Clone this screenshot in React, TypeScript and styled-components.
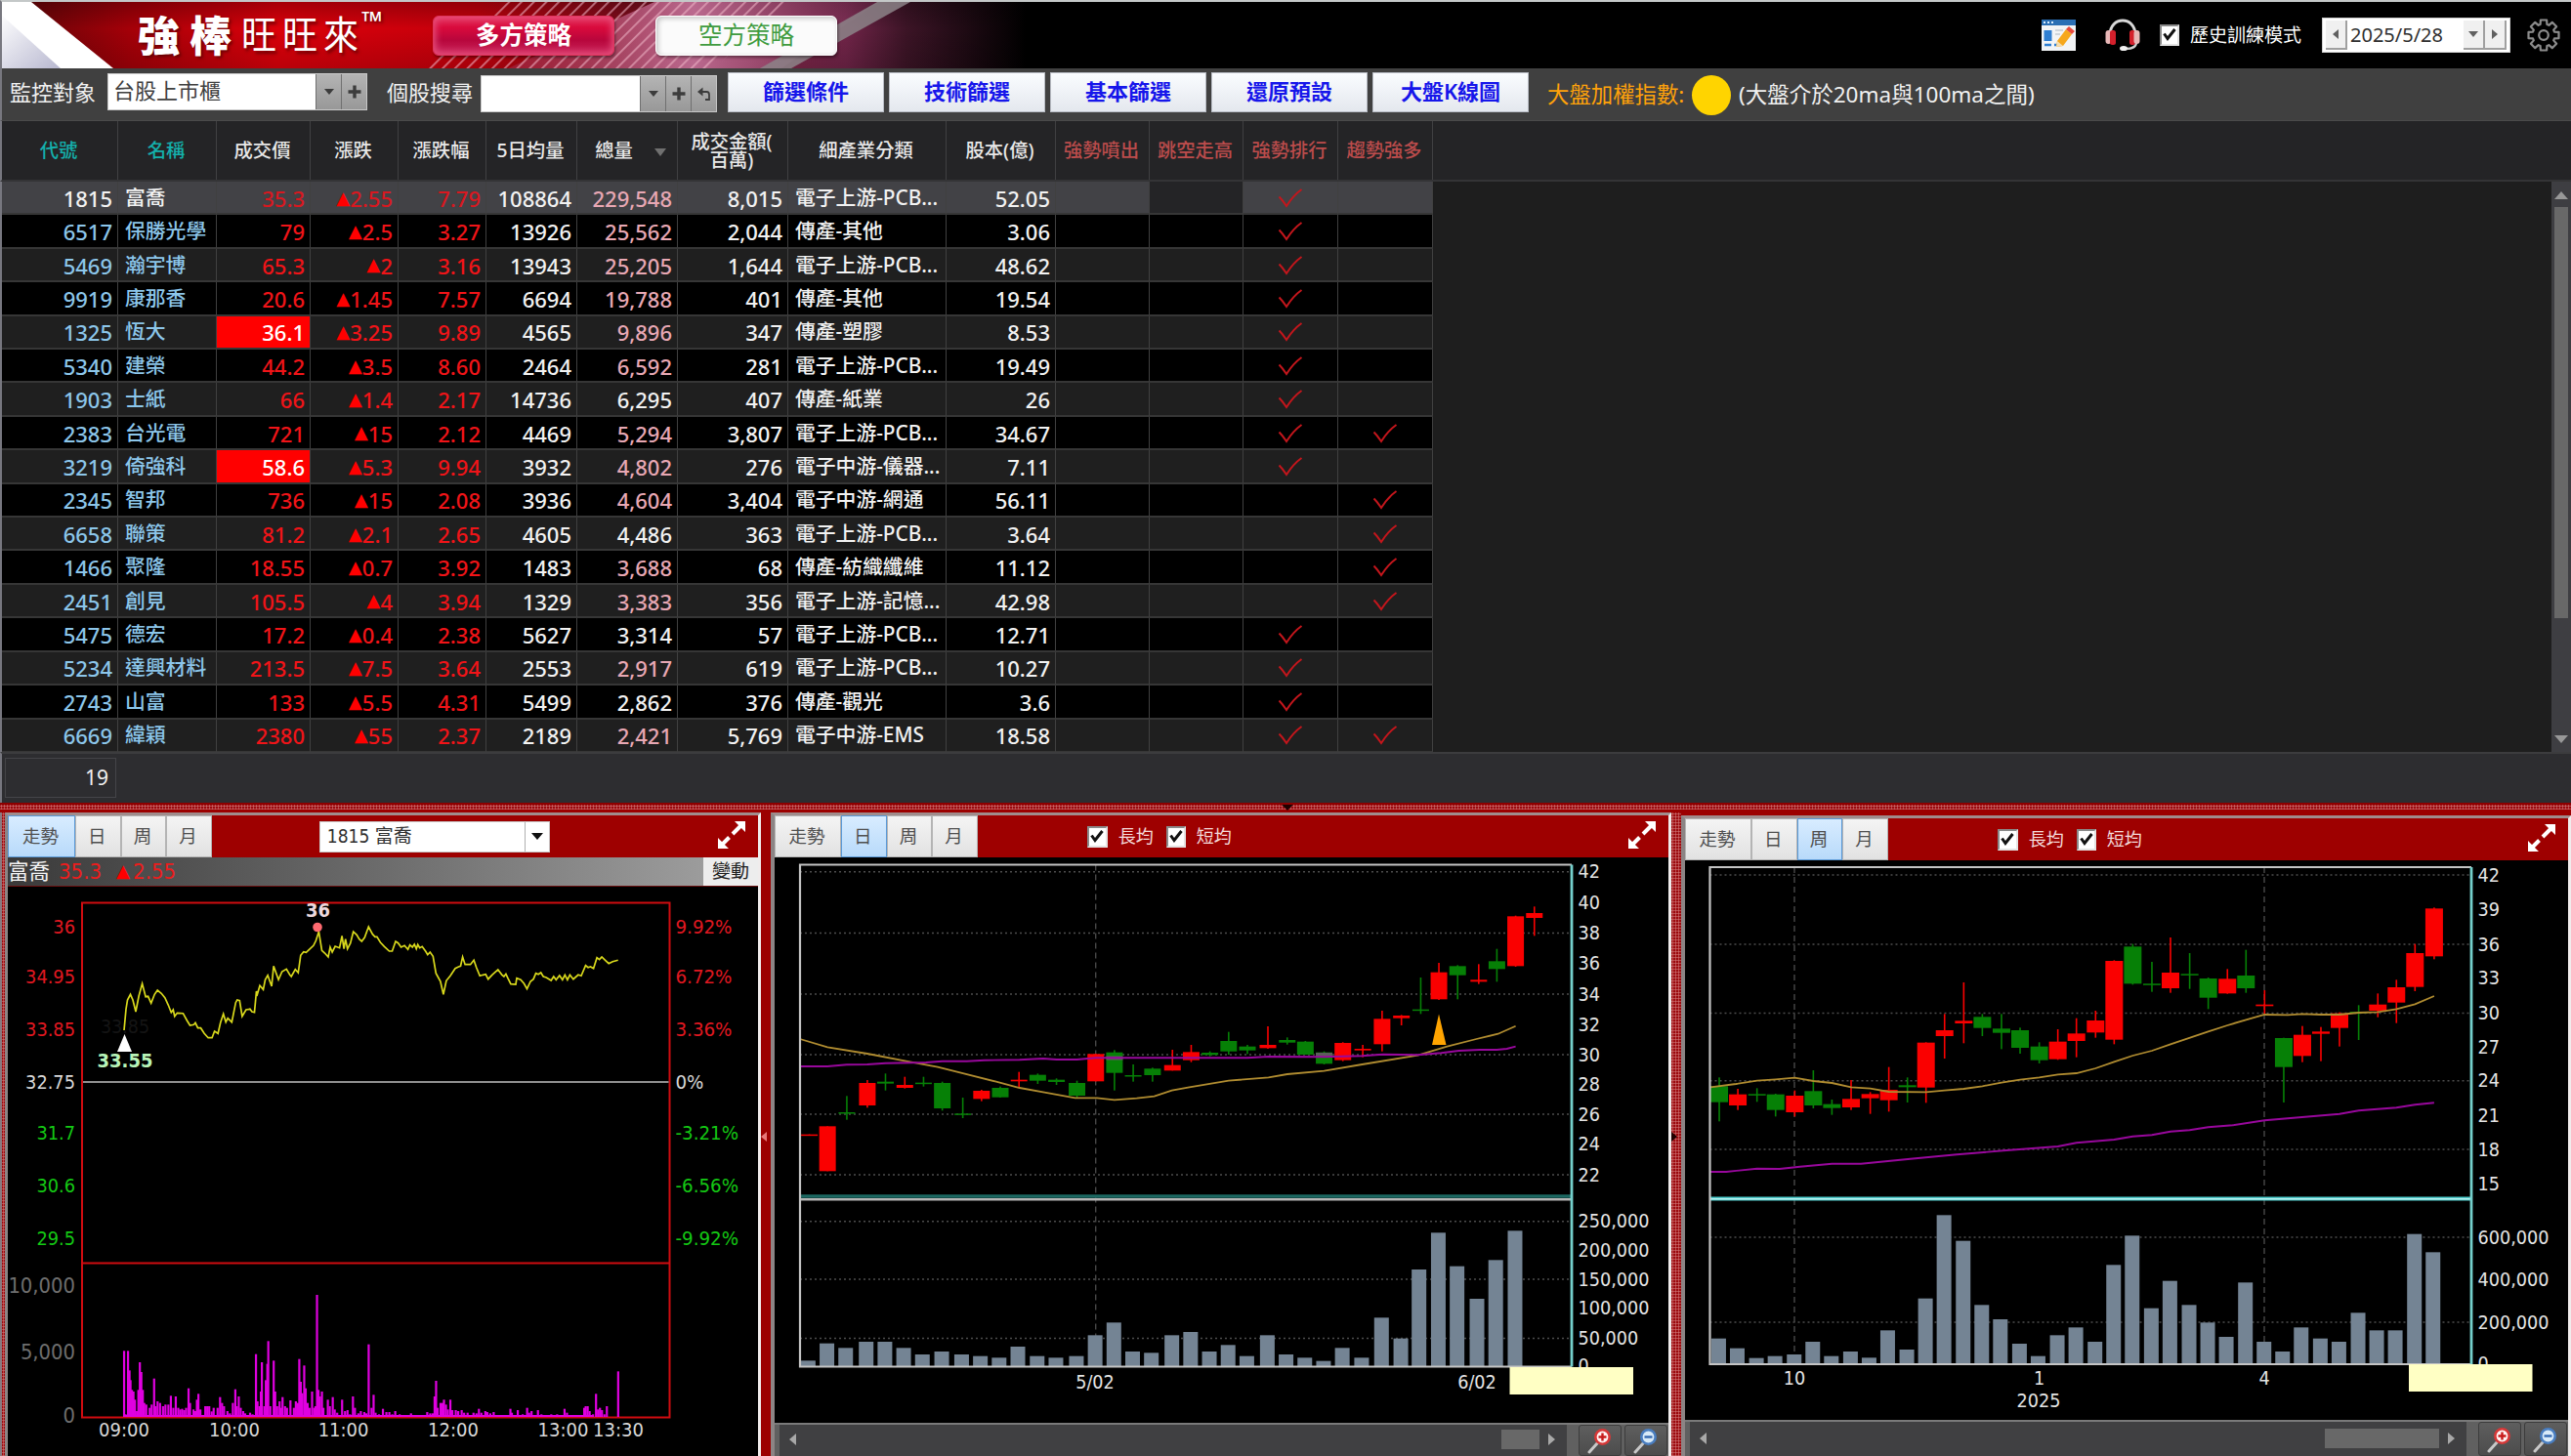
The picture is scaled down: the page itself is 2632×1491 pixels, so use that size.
import React from "react";
import styled, { createGlobalStyle, css } from "styled-components";

const UI = `"Noto Sans", "Noto Sans CJK TC", sans-serif`;
const AXIS = `"DejaVu Sans Condensed", "DejaVu Sans", "Noto Sans CJK TC", sans-serif`;

const Global = createGlobalStyle`
  *, *::before, *::after { box-sizing: border-box; }
  body { margin: 0; background: #1f1f1f; overflow: hidden; font-family: ${UI}; }
`;

const Window = styled.div`
  width: 2632px;
  height: 1491px;
  display: flex;
  flex-direction: column;
  overflow: hidden;
  color: #f0f0f0;
  line-height: 1;
  white-space: nowrap;
  font-family: ${UI};
`;

/* ---------- header ---------- */

const Header = styled.header`
  position: relative;
  height: 70px;
  flex: none;
  border-top: 2px solid #c4c8c8;
  border-left: 2px solid #77777f;
  background: #000;
  display: flex;
  align-items: center;
`;

const BannerArt = styled.svg`
  position: absolute;
  left: 0;
  top: 0;
`;

const Brand = styled.div`
  position: relative;
  width: 441px;
  padding-left: 139px;
  display: flex;
  align-items: center;
  color: #fff;
  text-shadow: 2px 2px 3px rgba(60, 0, 0, 0.6);
`;

const BrandBold = styled.span`
  font-size: 43px;
  font-weight: 900;
  letter-spacing: 10px;
`;

const BrandLight = styled.span`
  font-size: 36px;
  font-weight: 400;
  letter-spacing: 6px;
  transform: scaleY(1.1);
`;

const Trademark = styled.span`
  font-size: 28px;
  align-self: flex-start;
  margin-left: -3px;
  margin-top: -8px;
`;

const Strategy = styled.button<{ $light?: boolean }>`
  position: relative;
  width: 186px;
  height: 41px;
  margin: 0 42px 0 0;
  padding: 0;
  border-radius: 6px;
  font: ${(p) => (p.$light ? 400 : 700)} 24.5px/1 ${UI};
  color: ${(p) => (p.$light ? "#3f9b3f" : "#fff")};
  border: 1px solid ${(p) => (p.$light ? "#fff" : "#e0345c")};
  background: ${(p) =>
    p.$light
      ? "#fbfbfb"
      : "linear-gradient(#e4305c 0%, #d80a3c 30%, #b8063c 62%, #cc2a60 100%)"};
  box-shadow: ${(p) =>
    p.$light
      ? "inset 2px 2px 5px #c8c8c8, 1px 2px 3px rgba(0,0,0,.4)"
      : "inset 0 0 7px 2px #e8507c, 1px 2px 3px rgba(0,0,0,.4)"};
`;

const HeaderTools = styled.div`
  position: relative;
  margin-left: auto;
  display: flex;
  align-items: center;
  padding-right: 11px;
  height: 100%;
`;

const ModeLabel = styled.span`
  font-size: 19px;
  color: #fff;
  margin: 0 21px 0 11px;
`;

const Box = styled.span<{ $w: number }>`
  width: ${(p) => p.$w}px;
  height: 22px;
  flex: none;
  background: #fff;
  border: 2px solid #8a8a8a;
  border-right-color: #e4e4e4;
  border-bottom-color: #e4e4e4;
  display: flex;
  align-items: center;
  justify-content: center;
`;

const DateBox = styled.div`
  width: 193px;
  height: 36px;
  padding: 2px 3px;
  background: #fff;
  border: 1px solid #d0d0d0;
  display: flex;
  color: #303030;
  margin-right: 17px;
`;

const DateText = styled.span`
  flex: 1;
  display: flex;
  align-items: center;
  padding-left: 3px;
  font-size: 20px;
`;

const DateButton = styled.span`
  width: 22px;
  display: flex;
  align-items: center;
  justify-content: center;
  background: #f0f0f0;
  border-right: 2px solid #a0a0a0;
  border-bottom: 2px solid #a0a0a0;
`;

const Arrow = styled.i<{ $dir: "up" | "down" | "left" | "right"; $c: string; $s?: number; $l?: number }>`
  display: block;
  width: 0;
  height: 0;
  ${({ $dir, $c, $s = 5, $l = 6 }) => {
    const side = { up: "bottom", down: "top", left: "right", right: "left" }[$dir];
    const vertical = $dir === "up" || $dir === "down";
    return css`
      border: 0 solid transparent;
      border-width: ${vertical ? `0 ${$s}px` : `${$s}px 0`};
      border-${side}: ${$l}px solid ${$c};
    `;
  }}
`;

/* ---------- toolbar ---------- */

const Toolbar = styled.div`
  height: 54px;
  flex: none;
  background: #404040;
  border-left: 2px solid #77777f;
  border-bottom: 1px solid #4a4a4a;
  padding: 2px 0 0 8px;
  display: flex;
  align-items: center;
  font-size: 22px;
`;

const Caption = styled.span<{ $w: number; $gap?: number }>`
  width: ${(p) => p.$w}px;
  margin-left: ${(p) => p.$gap ?? 0}px;
  padding-bottom: 7px;
`;

const Combo = styled.div<{ $w: number; $shift?: number }>`
  width: ${(p) => p.$w}px;
  height: 38px;
  margin-top: ${(p) => p.$shift ?? 0}px;
  display: flex;
  background: #fff;
  border: 1px solid #c8c8c8;
  color: #404040;
`;

const ComboText = styled.span`
  flex: 1;
  display: flex;
  align-items: center;
  padding: 0 0 3px 5px;
`;

const ComboButton = styled.span`
  width: 26px;
  display: flex;
  align-items: center;
  justify-content: center;
  background: linear-gradient(#b4b4b4, #989898);
  border-left: 1px solid #707070;
`;

const FilterButton = styled.button`
  width: 160px;
  height: 41px;
  margin: 0 5px 0 0;
  padding: 0 0 4px;
  border: 1px solid #b8bcc4;
  background: linear-gradient(#fafcff, #e4e8ee);
  color: #1616ea;
  font: 600 22px/1 ${UI};
`;

const FilterGroup = styled.div`
  display: flex;
  margin: -6px 0 0 11px;
`;

const IndexInfo = styled.div`
  display: flex;
  align-items: center;
  margin-left: 14px;
`;

const IndexName = styled.span`
  color: #ffa20a;
  width: 148px;
  font-size: 22.4px;
`;

const IndexDot = styled.span`
  width: 40px;
  height: 41px;
  border-radius: 50%;
  background: #ffd400;
  margin-right: 8px;
`;

const IndexNote = styled.span`
  font-size: 22.5px;
`;

/* ---------- stock grid ---------- */

const COLS = "119px 101px 96px 90px 90px 93px 103px 113px 162px 112px 96px 96px 97px 97px";

const GridHead = styled.div`
  height: 62px;
  flex: none;
  display: grid;
  grid-template-columns: ${COLS};
  background: #242426;
  border-left: 2px solid #77777f;
  border-bottom: 2px solid #343436;
`;

const HeadCell = styled.div<{ $c?: string }>`
  display: flex;
  align-items: center;
  justify-content: center;
  text-align: center;
  border-right: 1px solid #404042;
  padding-right: 2px;
  font-size: 19.3px;
  font-weight: 500;
  color: ${(p) => p.$c ?? "#e8e8e8"};
`;

const SortArrow = styled.span`
  margin-left: 22px;
  margin-right: -9px;
  margin-top: 4px;
`;

const GridBody = styled.div`
  height: 584px;
  flex: none;
  display: flex;
  justify-content: space-between;
  background: #1e1e1e;
  border-left: 2px solid #77777f;
  overflow: hidden;
`;

const Rows = styled.div`
  display: grid;
  grid-template-columns: ${COLS};
  grid-auto-rows: 34.42px;
`;

const Cell = styled.div<{ $bg: string; $c: string; $align?: "left" | "center" }>`
  display: flex;
  align-items: center;
  justify-content: ${(p) => (p.$align === "left" ? "flex-start" : p.$align === "center" ? "center" : "flex-end")};
  padding: ${(p) => (p.$align === "left" ? "0 0 0 7px" : p.$align === "center" ? "1px 0 0" : "1px 5px 0 0")};
  background: ${(p) => p.$bg};
  color: ${(p) => p.$c};
  font-size: ${(p) => (p.$align === "left" ? 20.8 : 22)}px;
  font-weight: 500;
  border-right: 1px solid #404040;
  border-bottom: 2px solid #363636;
  overflow: hidden;
`;

const Up = styled.span`
  font-family: "DejaVu Sans", sans-serif;
  font-size: 0.83em;
  color: #f00;
`;

const VScroll = styled.div`
  width: 20px;
  background: #3e3e42;
  display: flex;
  flex-direction: column;
  align-items: center;
  padding: 10px 0 9px;
  gap: 8px;
`;

const VThumb = styled.div`
  width: 14px;
  height: 421px;
  background: #686868;
  margin-bottom: auto;
`;

const Summary = styled.div`
  height: 52px;
  flex: none;
  background: #2d2d30;
  border-left: 2px solid #77777f;
  border-top: 2px solid #3c3c3e;
  padding: 4px 3px;
`;

const SummaryBox = styled.div`
  width: 114px;
  height: 41px;
  border: 1px solid #444448;
  display: flex;
  align-items: center;
  justify-content: flex-end;
  padding-right: 7px;
  font-size: 21px;
`;

/* ---------- chart panes ---------- */

const dotted = css`
  background-color: #9c0a0e;
  background-image: radial-gradient(circle, #c86a6a 0.9px, transparent 1.2px);
  background-size: 3px 3px;
`;

const HSplit = styled.div`
  height: 10px;
  flex: none;
  ${dotted}
  border-bottom: 3px solid #9c0000;
  border-top: 2px solid #8c0000;
  padding-left: 1312px;
`;

const Panes = styled.div`
  flex: 1;
  min-height: 0;
  display: flex;
  background: #9c0000;
`;

const LeftEdge = styled.div`
  width: 5px;
  border-left: 2px solid #8a7a80;
  ${dotted}
`;

const VSplit = styled.div<{ $dots?: boolean }>`
  width: 10px;
  flex: none;
  display: flex;
  align-items: flex-start;
  padding-top: 327px;
  ${(p) => p.$dots && dotted}
`;

const Pane = styled.section<{ $w: number; $left: number; $top?: number }>`
  width: ${(p) => p.$w}px;
  flex: none;
  margin-top: ${(p) => p.$top ?? 0}px;
  border: solid #a09a9a;
  border-width: 3px 3px 0 ${(p) => p.$left}px;
  border-color: #a08c8c #f0ecec #a08c8c #8c8484;
  background: #000;
  display: flex;
  flex-direction: column;
`;

const PaneBar = styled.div`
  height: 43px;
  flex: none;
  background: #9e0000;
  display: flex;
  align-items: center;
  color: #f4dada;
  font-size: 18px;
`;

const Tab = styled.button<{ $w: number; $on?: boolean }>`
  width: ${(p) => p.$w}px;
  height: 100%;
  padding: 0 2px 1px 0;
  border: 1px solid ${(p) => (p.$on ? "#5a9ad8" : "#b4b4b4")};
  background: ${(p) => (p.$on ? "linear-gradient(#d8ecff, #b8dafa)" : "linear-gradient(#f4f4f4, #e2e2e2)")};
  color: #505050;
  font: 400 18.5px/1 ${UI};
`;

const StockSelect = styled.div`
  width: 236px;
  height: 32px;
  margin-left: 110px;
  background: #fff;
  border: 1px solid #c8c8c8;
  color: #303030;
  display: flex;
  font: 400 19px/1 ${AXIS};
`;

const SelectText = styled.span`
  flex: 1;
  display: flex;
  align-items: center;
  padding-left: 7px;
`;

const SelectButton = styled.span`
  width: 25px;
  border-left: 1px solid #b0b0b0;
  display: flex;
  align-items: center;
  justify-content: center;
`;

const AverageLabel = styled.span`
  margin: 0 13px 0 11px;
  padding-bottom: 2px;
`;

const Expand = styled.svg<{ $r: number }>`
  margin-left: auto;
  margin-right: ${(p) => p.$r}px;
  margin-top: -3px;
`;

const QuoteBar = styled.div`
  height: 30px;
  flex: none;
  display: flex;
  align-items: center;
  background: linear-gradient(90deg, #3a3a3a, #6c6c6c 50%, #a4a4a4);
  border-bottom: 1px solid #6a1010;
  color: #ee1c1c;
  font-size: 22px;
  font-family: ${AXIS};
`;

const QuoteName = styled.span`
  color: #f4f4f4;
  width: 52px;
  font-size: 21.5px;
`;

const QuotePrice = styled.span`
  width: 59px;
`;

const QuoteChange = styled.span`
  margin-left: 3px;
`;

const ChangeButton = styled.span`
  margin-left: auto;
  width: 56px;
  height: 100%;
  background: #ededed;
  color: #202020;
  display: flex;
  align-items: center;
  justify-content: center;
  font-size: 19px;
`;

const Plot = styled.svg`
  display: block;
  flex: 1;
  min-height: 0;
  width: 100%;
  font-family: ${AXIS};
`;

const ScrollRow = styled.div<{ $h: number }>`
  height: ${(p) => p.$h}px;
  flex: none;
  display: flex;
  background: #606060;
  border-top: 2px solid #7a7a7a;
  padding-left: 5px;
  gap: 3px;
`;

const HTrack = styled.div<{ $w: number }>`
  width: ${(p) => p.$w}px;
  margin-right: 9px;
  background: #404042;
  display: flex;
  align-items: center;
  padding: 0 12px 2px 10px;
`;

const HThumb = styled.div<{ $w: number }>`
  width: ${(p) => p.$w}px;
  height: 20px;
  margin: 0 9px 0 auto;
  background: #686868;
`;

const ZoomButton = styled.span`
  width: 44px;
  background: linear-gradient(#5e5e5e, #4c4c4c);
  border: 1px solid #3c3c3c;
  border-radius: 3px;
  display: flex;
  align-items: center;
  justify-content: center;
`;

/* ---------- small drawings ---------- */

const Tick = () => (
  <svg width="16" height="16" viewBox="0 0 16 16">
    <path d="M2.5 6.5 L6 11.5 L13.5 2" fill="none" stroke="#111" strokeWidth="3" />
  </svg>
);

const CheckMark = () => (
  <svg width="26" height="22" viewBox="0 0 26 22">
    <path d="M1.5 9.5 Q5 13 9 19 Q16 8 24.5 2" fill="none" stroke="#c4161c" strokeWidth="2" />
  </svg>
);

const Plus = () => (
  <svg width="14" height="14" viewBox="0 0 14 14">
    <path d="M7 0.5V13.5M0.5 7H13.5" stroke="#3c3c3c" strokeWidth="3.4" />
  </svg>
);

const Undo = () => (
  <svg width="14" height="16" viewBox="0 0 14 16">
    <path d="M3 6H9.5Q12 6 12 9V14H8" fill="none" stroke="#3c3c3c" strokeWidth="1.8" />
    <path d="M0 6L5.5 1.5V10.5Z" fill="#3c3c3c" />
  </svg>
);

const Diagonal = ({ r }: { r: number }) => (
  <Expand $r={r} width="30" height="30" viewBox="0 0 30 30">
    <path d="M5 25L12.5 17.5M16 14L25 5" stroke="#fff" strokeWidth="4" />
    <path d="M29 1V12L18 1ZM1 29V18L12 29Z" fill="#fff" />
  </Expand>
);

const Magnifier = ({ plus }: { plus?: boolean }) => (
  <svg width="28" height="28" viewBox="0 0 28 28">
    <path d="M12 16L3 26" stroke="#c8c8c8" strokeWidth="3" strokeLinecap="round" />
    <circle cx="16.5" cy="10.5" r="7.2" fill={plus ? "#fff2f2" : "#d8eaf8"} stroke={plus ? "#d63838" : "#4a7ec0"} strokeWidth="2.6" />
    <path d={plus ? "M16.5 6.5V14.5M12.5 10.5H20.5" : "M12.5 10.5H20.5"} stroke={plus ? "#c81c1c" : "#3468b0"} strokeWidth="2.4" />
  </svg>
);

const ToolIcon = styled.svg<{ $gap: number }>`
  margin-right: ${(p) => p.$gap}px;
`;

const NotesIcon = () => (
  <ToolIcon $gap={30} width="35" height="32" viewBox="0 0 35 32">
    <rect width="35" height="32" fill="#f2f4f6" />
    <rect width="35" height="6" fill="#2a6fb4" />
    <path d="M2 3h2M6 3h2M10 3h2" stroke="#d8ecff" strokeWidth="2" />
    <rect x="2.5" y="11" width="8" height="11" fill="#2f7fd2" />
    <path d="M3 26h7M13 26h3" stroke="#2f7fd2" strokeWidth="2.4" />
    <path d="M14 11h8M14 15h5" stroke="#c4ccd4" strokeWidth="1.6" />
    <path d="M16 22L25 10L31 15L22 27L15 28Z" fill="#f6a81c" />
    <path d="M25 10L28 7L34 12L31 15Z" fill="#e84a3c" />
    <path d="M16 22L15 28L22 27Z" fill="#f3dcae" />
  </ToolIcon>
);

const Headset = () => (
  <ToolIcon $gap={20} width="36" height="34" viewBox="0 0 36 34">
    <path d="M5 17C5 -3 31 -3 31 17" fill="none" stroke="#d8d8d8" strokeWidth="3" />
    <path d="M32 24Q32 31 21 31" fill="none" stroke="#d0d0d0" strokeWidth="2.4" />
    <ellipse cx="19" cy="30.5" rx="4" ry="2.6" fill="#f0f0f0" />
    <rect x="0.5" y="12" width="6" height="14" rx="3" fill="#e8b8b8" />
    <rect x="5" y="12" width="6" height="15" rx="2.5" fill="#d4202c" />
    <rect x="25" y="12" width="6" height="15" rx="2.5" fill="#d4202c" />
    <rect x="29.5" y="12" width="6" height="14" rx="3" fill="#e8b8b8" />
  </ToolIcon>
);

const Gear = () => {
  const teeth = Array.from({ length: 8 }, (_, i) => {
    const a = (i * Math.PI) / 4;
    const p = (r: number, d: number) =>
      `${(17 + r * Math.sin(a + d)).toFixed(2)} ${(17 - r * Math.cos(a + d)).toFixed(2)}`;
    return `${i ? "L" : "M"}${p(11.5, -0.3)}L${p(15.8, -0.2)}L${p(15.8, 0.2)}L${p(11.5, 0.3)}`;
  }).join("");
  return (
    <svg width="34" height="34" viewBox="0 0 34 34">
      <path d={`${teeth}Z`} fill="none" stroke="#8c8c8c" strokeWidth="2.2" strokeLinejoin="round" />
      <circle cx="17" cy="17" r="4.8" fill="none" stroke="#8c8c8c" strokeWidth="2.2" />
    </svg>
  );
};

const Banner = () => (
  <BannerArt width="1080" height="68" viewBox="2 2 1080 68">
    <defs>
      <linearGradient id="red" x1="0" x2="1">
        <stop offset="0" stopColor="#6a0408" />
        <stop offset="0.1" stopColor="#a40008" />
        <stop offset="0.25" stopColor="#dc000a" />
        <stop offset="0.45" stopColor="#c4000c" />
        <stop offset="0.6" stopColor="#7e0c1c" />
        <stop offset="0.72" stopColor="#882848" />
        <stop offset="0.82" stopColor="#702448" />
        <stop offset="0.88" stopColor="#3c1426" />
        <stop offset="1" stopColor="#000" />
      </linearGradient>
      <linearGradient id="shade" x1="0" x2="0" y1="0" y2="1">
        <stop offset="0" stopColor="#000" stopOpacity="0.25" />
        <stop offset="0.4" stopColor="#000" stopOpacity="0" />
        <stop offset="1" stopColor="#000" stopOpacity="0.15" />
      </linearGradient>
      <linearGradient id="lav" x1="0" x2="1" y1="0" y2="1">
        <stop offset="0" stopColor="#fff" />
        <stop offset="1" stopColor="#b8b8d0" />
      </linearGradient>
      <linearGradient id="pink" x1="0" x2="1">
        <stop offset="0" stopColor="#a02844" stopOpacity="0.6" />
        <stop offset="0.5" stopColor="#c878a0" stopOpacity="0.85" />
        <stop offset="1" stopColor="#803058" stopOpacity="0.3" />
      </linearGradient>
      <pattern id="hatch" width="9" height="9" patternUnits="userSpaceOnUse" patternTransform="rotate(-45)">
        <rect width="9" height="1.8" fill="#f0b8c8" fillOpacity="0.6" />
      </pattern>
    </defs>
    <path d="M30 2H1050V70H114Z" fill="url(#red)" />
    <path d="M30 2H1050V70H114Z" fill="url(#shade)" />
    <path d="M670 2H900L800 70H520Z" fill="url(#pink)" />
    <path d="M520 2H810L730 70H430Z" fill="url(#hatch)" />
    <path d="M898 2H932L810 70H778Z" fill="#8c8488" fillOpacity="0.85" />
    <path d="M0 2H32L116 70H0Z" fill="#fff" />
    <path d="M0 14L62 70H0Z" fill="url(#lav)" />
  </BannerArt>
);

/* ---------- data ---------- */

const HEADS: [string, string?][] = [
  ["代號", "#14b0ac"],
  ["名稱", "#14b0ac"],
  ["成交價"],
  ["漲跌"],
  ["漲跌幅"],
  ["5日均量"],
  ["總量"],
  ["成交金額(\n百萬)"],
  ["細產業分類"],
  ["股本(億)"],
  ["強勢噴出", "#bc4c4c"],
  ["跳空走高", "#bc4c4c"],
  ["強勢排行", "#bc4c4c"],
  ["趨勢強多", "#bc4c4c"],
];

const HeadText = styled.span`
  white-space: pre;
`;

type Stock = [string, string, string, string, string, string, string, string, string, string, string];

/* last field: "r" ranked, "t" trending, "w" neutral volume, "L" limit up */
const STOCKS: Stock[] = [
  ["1815", "富喬", "35.3", "2.55", "7.79", "108864", "229,548", "8,015", "電子上游-PCB...", "52.05", "r"],
  ["6517", "保勝光學", "79", "2.5", "3.27", "13926", "25,562", "2,044", "傳產-其他", "3.06", "r"],
  ["5469", "瀚宇博", "65.3", "2", "3.16", "13943", "25,205", "1,644", "電子上游-PCB...", "48.62", "r"],
  ["9919", "康那香", "20.6", "1.45", "7.57", "6694", "19,788", "401", "傳產-其他", "19.54", "r"],
  ["1325", "恆大", "36.1", "3.25", "9.89", "4565", "9,896", "347", "傳產-塑膠", "8.53", "rL"],
  ["5340", "建榮", "44.2", "3.5", "8.60", "2464", "6,592", "281", "電子上游-PCB...", "19.49", "r"],
  ["1903", "士紙", "66", "1.4", "2.17", "14736", "6,295", "407", "傳產-紙業", "26", "rw"],
  ["2383", "台光電", "721", "15", "2.12", "4469", "5,294", "3,807", "電子上游-PCB...", "34.67", "rt"],
  ["3219", "倚強科", "58.6", "5.3", "9.94", "3932", "4,802", "276", "電子中游-儀器...", "7.11", "rL"],
  ["2345", "智邦", "736", "15", "2.08", "3936", "4,604", "3,404", "電子中游-網通", "56.11", "t"],
  ["6658", "聯策", "81.2", "2.1", "2.65", "4605", "4,486", "363", "電子上游-PCB...", "3.64", "tw"],
  ["1466", "聚隆", "18.55", "0.7", "3.92", "1483", "3,688", "68", "傳產-紡織纖維", "11.12", "t"],
  ["2451", "創見", "105.5", "4", "3.94", "1329", "3,383", "356", "電子上游-記憶...", "42.98", "t"],
  ["5475", "德宏", "17.2", "0.4", "2.38", "5627", "3,314", "57", "電子上游-PCB...", "12.71", "rw"],
  ["5234", "達興材料", "213.5", "7.5", "3.64", "2553", "2,917", "619", "電子上游-PCB...", "10.27", "r"],
  ["2743", "山富", "133", "5.5", "4.31", "5499", "2,862", "376", "傳產-觀光", "3.6", "rw"],
  ["6669", "緯穎", "2380", "55", "2.37", "2189", "2,421", "5,769", "電子中游-EMS", "18.58", "rt"],
];

const StockRow = ({ s, i }: { s: Stock; i: number }) => {
  const selected = i === 0;
  const bg = selected ? "#424246" : i % 2 ? "#000" : "#1f1f1f";
  const flags = s[10];
  const white = "#f2f2f2";
  const red = selected ? "#d81820" : "#f01418";
  const id = selected ? white : "#8cc6ea";
  const limit = flags.includes("L");
  return (
    <>
      <Cell $bg={bg} $c={id}>{s[0]}</Cell>
      <Cell $bg={bg} $c={id} $align="left">{s[1]}</Cell>
      <Cell $bg={limit ? "#f00" : bg} $c={limit ? "#fff" : red}>{s[2]}</Cell>
      <Cell $bg={bg} $c={red}><Up>▲</Up>{s[3]}</Cell>
      <Cell $bg={bg} $c={red}>{s[4]}</Cell>
      <Cell $bg={bg} $c={white}>{s[5]}</Cell>
      <Cell $bg={bg} $c={flags.includes("w") ? white : "#e8a8b4"}>{s[6]}</Cell>
      <Cell $bg={bg} $c={white}>{s[7]}</Cell>
      <Cell $bg={bg} $c={white} $align="left">{s[8]}</Cell>
      <Cell $bg={bg} $c={white}>{s[9]}</Cell>
      <Cell $bg={bg} $c={white} />
      <Cell $bg={selected ? "#242426" : bg} $c={white} />
      <Cell $bg={bg} $c={red} $align="center">{flags.includes("r") && <CheckMark />}</Cell>
      <Cell $bg={bg} $c={red} $align="center">{flags.includes("t") && <CheckMark />}</Cell>
    </>
  );
};

/* ---------- intraday chart ---------- */

type Pair = [number, number];

const INTRADAY: Pair[] = [
  [252,705],[256,640],[259,612],[265,595],[270,612],[276,648],[282,600],[289,562],[296,602],[301,601],[307,622],[314,595],[320,582],[328,592],[335,605],[342,628],[348,650],[352,642],[355,662],[360,652],[372,653],[380,675],[386,690],[394,688],[397,682],[402,698],[408,698],[415,715],[423,728],[431,728],[436,708],[443,715],[448,682],[454,655],[459,680],[463,668],[471,680],[479,620],[482,612],[487,614],[492,662],[500,642],[508,640],[512,648],[517,650],[521,585],[523,594],[528,568],[535,580],[539,550],[544,536],[552,570],[556,508],[566,550],[573,525],[582,517],[589,535],[592,540],[600,518],[606,528],[611,475],[617,464],[622,466],[632,452],[637,445],[642,430],[648,402],[654,460],[660,468],[667,480],[671,450],[675,465],[681,447],[690,452],[695,415],[699,455],[702,425],[706,455],[712,438],[718,402],[725,412],[730,425],[735,432],[741,420],[749,387],[757,410],[762,418],[766,418],[773,435],[781,448],[791,462],[797,462],[804,432],[809,437],[815,450],[822,445],[829,457],[833,443],[838,450],[842,441],[846,455],[849,442],[853,452],[858,448],[865,463],[869,473],[874,465],[880,478],[886,530],[895,555],[901,595],[907,553],[915,538],[925,515],[932,510],[936,508],[940,480],[945,503],[956,503],[963,490],[968,512],[975,538],[982,535],[987,533],[992,548],[1000,535],[1006,527],[1012,519],[1020,535],[1024,540],[1028,532],[1032,545],[1038,563],[1048,564],[1050,545],[1058,550],[1065,562],[1071,578],[1078,555],[1084,548],[1089,530],[1094,533],[1099,528],[1104,540],[1110,543],[1120,552],[1125,540],[1130,550],[1137,537],[1143,550],[1148,535],[1153,550],[1158,535],[1165,548],[1175,535],[1181,538],[1190,506],[1195,512],[1200,510],[1206,515],[1213,482],[1218,488],[1223,480],[1230,490],[1237,500],[1245,494],[1256,490],
];

const TICKS: Pair[] = [
  [252,730],[255,925],[260,730],[263,790],[265,820],[268,850],[271,855],[274,880],[278,915],[281,850],[284,765],[287,795],[290,850],[293,890],[297,895],[304,905],[308,895],[313,815],[316,900],[320,885],[325,890],[331,900],[336,895],[342,895],[347,868],[352,905],[357,870],[362,905],[366,910],[370,908],[374,912],[378,905],[383,845],[386,890],[393,910],[397,915],[400,880],[403,862],[407,910],[417,900],[421,900],[425,900],[430,916],[434,905],[442,905],[447,872],[451,890],[455,900],[462,915],[467,922],[473,890],[478,848],[481,900],[485,870],[489,905],[494,915],[498,922],[508,920],[513,925],[520,740],[523,885],[527,900],[530,855],[532,765],[537,900],[540,820],[543,770],[545,700],[549,900],[556,760],[559,855],[563,900],[568,885],[571,905],[574,872],[579,900],[583,905],[590,882],[597,905],[601,885],[605,890],[608,755],[611,825],[614,860],[618,775],[621,845],[625,890],[629,905],[634,855],[638,905],[641,900],[644,558],[647,850],[650,870],[654,855],[657,905],[666,880],[670,900],[676,872],[680,910],[685,920],[695,880],[701,915],[706,912],[711,925],[717,870],[721,905],[728,922],[733,915],[740,918],[744,922],[749,710],[755,905],[759,865],[763,920],[770,925],[778,908],[785,918],[791,918],[797,925],[803,915],[812,925],[835,922],[868,918],[874,922],[879,922],[883,870],[886,822],[889,905],[895,890],[899,890],[902,880],[906,895],[910,910],[915,880],[919,912],[926,912],[931,915],[938,912],[943,920],[950,920],[962,920],[968,922],[973,908],[978,920],[986,915],[990,918],[996,922],[1003,918],[1020,928],[1037,908],[1040,920],[1052,912],[1062,925],[1071,905],[1075,920],[1080,915],[1093,912],[1100,925],[1120,925],[1132,925],[1147,908],[1152,920],[1165,928],[1187,905],[1190,900],[1194,900],[1198,915],[1205,925],[1211,862],[1215,910],[1219,905],[1223,912],[1228,925],[1233,900],[1256,793],
];

const line = (pts: Pair[], fx: (n: number) => number, fy: (n: number) => number) =>
  pts.map(([a, b]) => `${fx(a).toFixed(1)},${fy(b).toFixed(1)}`).join(" ");

const LEFT_SCALE: [string, string, number, string][] = [
  ["36", "9.92%", 949, "#e01820"],
  ["34.95", "6.72%", 1000, "#e01820"],
  ["33.85", "3.36%", 1054, "#e01820"],
  ["32.75", "0%", 1108, "#d8d8d8"],
  ["31.7", "-3.21%", 1160, "#14c814"],
  ["30.6", "-6.56%", 1214, "#14c814"],
  ["29.5", "-9.92%", 1268.5, "#14c814"],
];

const Intraday = () => {
  const fx = (n: number) => n / 1.985;
  const fy = (n: number) => 820 + n / 3;
  const vy = (n: number) => 1140 + n / 3;
  return (
    <Plot viewBox="8 908 768 583" preserveAspectRatio="none">
      <text x="128" y="1058" fontSize="19.5" textAnchor="middle" fill="#141414">33.85</text>
      <path d="M84 924.5H685.5V1451.5H84ZM84 1293.5H685.5" fill="none" stroke="#d00c10" strokeWidth="2" />
      <path d="M85 1108H684.5" stroke="#909090" strokeWidth="2" />
      {LEFT_SCALE.map(([p, q, y, c]) => (
        <g key={p} fill={c}>
          <text x="77" y={y + 6.5} fontSize="19.8" textAnchor="end">{p}</text>
          <text x="691.5" y={y + 6.5} fontSize="20.3">{q}</text>
        </g>
      ))}
      {([["10,000", 1316.5], ["5,000", 1384.5], ["0", 1450]] as [string, number][]).map(([t, y]) => (
        <text key={t} x="77" y={y + 7} fontSize="21.8" textAnchor="end" fill="#6e6e6e">{t}</text>
      ))}
      {([["09:00", 127], ["10:00", 240], ["11:00", 351.6], ["12:00", 464], ["13:00", 576.5], ["13:30", 633]] as [string, number][]).map(([t, x]) => (
        <text key={t} x={x} y="1471" fontSize="20" textAnchor="middle" fill="#d8d8d8">{t}</text>
      ))}
      {TICKS.map(([x, y]) => (
        <rect key={x} x={fx(x) - 1} y={vy(y)} width="2.2" height={1451 - vy(y)} fill="#e000e0" />
      ))}
      <path d={`M126 1450H${fx(1205)}`} stroke="#e000e0" strokeWidth="2" />
      <polyline points={line(INTRADAY, fx, fy)} fill="none" stroke="#d8d81c" strokeWidth="1.7" />
      <circle cx="325" cy="949.5" r="4.8" fill="#ff6a70" />
      <path d="M127.5 1059L135 1077H120Z" fill="#fff" />
      <text x="325.5" y="939" fontSize="20" fontWeight="700" textAnchor="middle" fill="#ecd8dc">36</text>
      <text x="128" y="1093" fontSize="20" fontWeight="700" textAnchor="middle" fill="#b8f4b8">33.55</text>
    </Plot>
  );
};

/* ---------- candle charts ---------- */

/* x, rising, high, body top, body bottom, low */
type Candle = [number, 0 | 1, number, number, number, number];

const DAILY: Candle[] = [
  [81,1,1025,1025,1029,1029],[112,1,1000,1000,1138,1138],[145,0,907,957,960,980],[180,1,858,867,936,943],[211,0,838,863,869,890],[244,1,848,873,882,884],[276,0,848,866,869,878],[308,0,863,867,945,952],[343,0,912,961,964,975],[375,1,888,891,916,923],[407,0,878,882,911,912],[439,1,833,857,862,882],[471,0,838,842,860,870],[503,0,853,857,864,873],[538,0,860,867,906,912],[570,1,777,778,862,862],[602,0,766,773,836,890],[634,0,810,843,847,863],[667,0,820,823,843,863],[701,1,765,812,829,829],[733,1,750,772,797,803],[765,0,770,774,781,785],[797,0,710,738,770,780],[829,0,750,755,767,778],[864,1,693,750,760,762],[897,0,727,735,743,749],[928,0,738,740,780,780],[960,0,770,773,808,810],[992,1,742,744,797,800],[1026,1,750,762,767,788],[1059,1,645,670,748,770],[1092,1,658,660,668,690],[1125,0,543,641,644,655],[1156,1,498,527,610,612],[1188,0,505,508,536,610],[1224,1,502,550,556,563],[1255,0,455,493,517,556],[1287,1,353,355,508,510],[1319,1,325,345,360,415],
];
const DAILY_SHORT: Pair[] = [[65,732],[112,757],[180,777],[246,800],[300,818],[345,838],[400,863],[440,882],[480,895],[535,913],[572,913],[602,919],[640,914],[670,908],[700,890],[730,880],[797,860],[865,850],[897,840],[960,830],[1025,810],[1120,782],[1170,755],[1220,732],[1257,716],[1287,692]];
const DAILY_LONG: Pair[] = [[65,816],[112,816],[145,811],[180,810],[211,806],[280,804],[308,800],[350,800],[380,797],[440,796],[480,792],[503,795],[538,795],[570,790],[829,790],[865,786],[960,787],[1025,784],[1060,779],[1120,781],[1160,775],[1190,768],[1225,765],[1255,765],[1272,762],[1287,755]];
const DAILY_VOL: Pair[] = [[79,730],[111,677],[143,691],[178,672],[210,672],[242,691],[274,711],[307,702],[341,711],[373,716],[405,721],[437,687],[470,716],[502,721],[537,716],[569,652],[601,613],[633,702],[665,706],[700,652],[732,642],[764,702],[796,682],[828,716],[863,652],[895,711],[927,721],[959,731],[991,691],[1024,721],[1058,598],[1091,662],[1122,450],[1155,337],[1187,440],[1221,540],[1253,421],[1286,331]];

const WEEKLY: Candle[] = [
  [101,0,850,877,926,985],[133,1,885,902,936,950],[166,0,883,901,904,925],[198,0,900,902,950,970],[231,1,890,906,957,970],[263,0,828,892,936,945],[295,0,918,932,944,965],[328,1,858,916,942,950],[361,1,895,901,914,962],[393,1,818,888,920,955],[425,0,850,874,880,927],[457,1,742,743,881,928],[489,1,655,705,723,792],[522,1,558,676,684,745],[554,0,655,664,698,723],[587,0,655,700,713,763],[619,0,697,705,759,777],[652,0,742,755,797,807],[684,1,702,740,794,796],[716,1,668,715,738,788],[749,1,645,675,712,728],[781,1,490,492,734,748],[813,0,440,448,562,565],[846,0,495,562,566,587],[878,1,420,528,576,590],[911,0,468,532,536,578],[943,0,543,546,605,640],[976,1,517,547,592,593],[1008,0,458,537,576,590],[1040,1,582,626,631,655],[1073,0,728,729,818,927],[1105,1,692,719,784,803],[1137,1,695,709,716,800],[1169,1,650,653,698,755],[1202,0,628,648,652,735],[1235,1,592,626,645,665],[1267,1,550,573,620,683],[1299,1,440,468,572,585],[1332,1,328,331,478,487],
];
const WEEKLY_SHORT: Pair[] = [[86,880],[130,870],[166,860],[198,856],[231,851],[263,861],[295,867],[328,880],[361,884],[393,894],[457,895],[489,890],[522,885],[554,877],[587,866],[619,857],[652,850],[684,841],[716,837],[749,822],[781,802],[813,783],[846,768],[878,748],[943,709],[976,690],[1008,673],[1040,657],[1080,658],[1105,655],[1137,657],[1169,657],[1202,651],[1235,649],[1267,640],[1299,625],[1332,600]];
const WEEKLY_LONG: Pair[] = [[85,1140],[113,1140],[166,1130],[205,1131],[240,1124],[295,1115],[345,1115],[430,1100],[510,1087],[590,1075],[684,1062],[716,1051],[781,1041],[813,1031],[846,1027],[878,1016],[911,1012],[943,1003],[985,997],[1040,982],[1169,962],[1202,952],[1267,943],[1299,934],[1332,928]];
const WEEKLY_VOL: Pair[] = [[100,662],[132,692],[165,722],[197,716],[230,711],[262,672],[294,716],[327,702],[359,721],[391,637],[424,696],[456,539],[488,283],[521,362],[553,559],[585,603],[618,678],[650,716],[683,652],[715,628],[748,672],[780,436],[812,346],[845,569],[877,485],[910,559],[942,613],[974,657],[1007,490],[1039,672],[1071,702],[1103,628],[1136,662],[1168,672],[1201,583],[1233,637],[1265,637],[1298,341],[1330,397]];

interface CandleProps {
  viewBox: string;
  x0: number;
  k: number;
  bodyWidth: number;
  frame: { left: number; right: number; top: number; split: number; bottom: number };
  prices: [string, number, boolean][];
  volumes: [string, number, boolean][];
  dates: [string, number, number][];
  guides: number[];
  candles: Candle[];
  short: Pair[];
  long: Pair[];
  bars: Pair[];
  note: [number, number];
  duller?: boolean;
  marker?: boolean;
}

const CandleChart = (p: CandleProps) => {
  const fx = (n: number) => p.x0 + n / p.k;
  const fy = (n: number) => 820 + n / 3;
  const vy = (n: number) => 1150 + n / 3;
  const { left, right, top, split, bottom } = p.frame;
  return (
    <Plot viewBox={p.viewBox} preserveAspectRatio="none">
      {[...p.prices, ...p.volumes].filter((r) => r[2]).map(([t, y]) => (
        <path key={t} d={`M${left} ${y}H${right}`} stroke="#4c4c4c" strokeWidth="1.6" strokeDasharray="2 3" />
      ))}
      {p.guides.map((x) => (
        <path key={x} d={`M${x} ${top}V${bottom}`} stroke="#484848" strokeWidth="1.4" strokeDasharray="6 4" />
      ))}
      {p.bars.map(([x, y]) => (
        <rect key={x} x={Math.max(fx(x) - 7.5, left)} y={vy(y)} width="15" height={bottom - vy(y)} fill="#748494" />
      ))}
      {p.candles.map(([x, up, hi, a, b, lo]) => {
        const c = up ? "#fa0000" : "#068006";
        return (
          <g key={x} fill={c}>
            <rect x={fx(x) - 0.8} y={fy(hi)} width="1.6" height={fy(lo) - fy(hi)} />
            <rect x={fx(x) - p.bodyWidth / 2} y={fy(a)} width={p.bodyWidth} height={Math.max(fy(b) - fy(a), 1.5)} />
          </g>
        );
      })}
      {p.marker && (
        <>
          <path d="M1132.500 1081.500H1149.500V1085.500H1132.500ZM1347 1078H1364V1083H1347Z" fill="#5c5c5c" />
          <path d="M1473 1038.500L1480.500 1070H1466Z" fill="#ffa400" />
        </>
      )}
      <polyline points={line(p.short, fx, fy)} fill="none" stroke="#b08c30" strokeWidth="1.8" />
      <polyline points={line(p.long, fx, fy)} fill="none" stroke="#98089c" strokeWidth="1.9" />
      <path d={`M${left} ${split - (p.duller ? 3 : 0)}H${right}`} stroke={p.duller ? "#1c6862" : "#4ccccc"} strokeWidth={p.duller ? 3.4 : 4} />
      <path d={`M${left} ${split + 0.3}H${right}`} stroke={p.duller ? "#b4b4b4" : "#b8f0f0"} strokeWidth={p.duller ? 2.6 : 1.4} />
      <path d={`M${right} ${top}H${left}V${bottom}H${right}`} fill="none" stroke="#c4c4c4" strokeWidth="2.2" />
      <path d={`M${right} ${top}V${bottom}`} stroke="#74d0cc" strokeWidth="2.8" />
      {[...p.prices, ...p.volumes].map(([t, y]) => (
        <text key={t} x={right + 6.5} y={y + 6.5} fontSize="19.6" fill="#e4e4e4">{t}</text>
      ))}
      {p.dates.map(([t, x, y]) => (
        <text key={t} x={x} y={y + 6.5} fontSize="19.6" textAnchor="middle" fill="#e4e4e4">{t}</text>
      ))}
      <rect x={p.note[0]} y={p.note[1]} width="126.5" height="28" fill="#ffffc4" />
    </Plot>
  );
};

const PaneTabs = ({ active, first }: { active: string; first: number }) => (
  <>
    <Tab $w={first} $on={active === "走勢"}>走勢</Tab>
    {["日", "周", "月"].map((t) => (
      <Tab key={t} $w={46.6} $on={active === t}>{t}</Tab>
    ))}
  </>
);

const AverageBox = styled(Box)<{ $ml?: number }>`
  margin-left: ${(p) => p.$ml ?? 0}px;
`;

const Averages = () => (
  <>
    <AverageBox $w={21} $ml={112}><Tick /></AverageBox>
    <AverageLabel>長均</AverageLabel>
    <AverageBox $w={20}><Tick /></AverageBox>
    <AverageLabel>短均</AverageLabel>
  </>
);

const PaneScroll = ({ h, track, thumb }: { h: number; track: number; thumb: number }) => (
  <ScrollRow $h={h}>
    <HTrack $w={track}>
      <Arrow $dir="left" $c="#a8a8a8" $s={6} $l={7} />
      <HThumb $w={thumb} />
      <Arrow $dir="right" $c="#a8a8a8" $s={6} $l={7} />
    </HTrack>
    <ZoomButton><Magnifier plus /></ZoomButton>
    <ZoomButton><Magnifier /></ZoomButton>
  </ScrollRow>
);

export default function App() {
  return (
    <Window>
      <Global />
      <Header>
        <Banner />
        <Brand>
          <BrandBold>強棒</BrandBold>
          <BrandLight>旺旺來</BrandLight>
          <Trademark>™</Trademark>
        </Brand>
        <Strategy>多方策略</Strategy>
        <Strategy $light>空方策略</Strategy>
        <HeaderTools>
          <NotesIcon />
          <Headset />
          <Box $w={20}><Tick /></Box>
          <ModeLabel>歷史訓練模式</ModeLabel>
          <DateBox>
            <DateButton><Arrow $dir="left" $c="#606060" /></DateButton>
            <DateText>2025/5/28</DateText>
            <DateButton><Arrow $dir="down" $c="#606060" /></DateButton>
            <DateButton><Arrow $dir="right" $c="#606060" /></DateButton>
          </DateBox>
          <Gear />
        </HeaderTools>
      </Header>

      <Toolbar>
        <Caption $w={100}>監控對象</Caption>
        <Combo $w={266} $shift={-8}>
          <ComboText>台股上市櫃</ComboText>
          <ComboButton><Arrow $dir="down" $c="#3c3c3c" /></ComboButton>
          <ComboButton><Plus /></ComboButton>
        </Combo>
        <Caption $w={96} $gap={20}>個股搜尋</Caption>
        <Combo $w={242} $shift={-4}>
          <ComboText />
          <ComboButton><Arrow $dir="down" $c="#3c3c3c" /></ComboButton>
          <ComboButton><Plus /></ComboButton>
          <ComboButton><Undo /></ComboButton>
        </Combo>
        <FilterGroup>
          {["篩選條件", "技術篩選", "基本篩選", "還原預設", "大盤K線圖"].map((t) => (
            <FilterButton key={t}>{t}</FilterButton>
          ))}
        </FilterGroup>
        <IndexInfo>
          <IndexName>大盤加權指數:</IndexName>
          <IndexDot />
          <IndexNote>(大盤介於20ma與100ma之間)</IndexNote>
        </IndexInfo>
      </Toolbar>

      <GridHead>
        {HEADS.map(([t, c]) => (
          <HeadCell key={t} $c={c}>
            <HeadText>{t}</HeadText>
            {t === "總量" && <SortArrow><Arrow $dir="down" $c="#707070" $s={6} $l={8} /></SortArrow>}
          </HeadCell>
        ))}
      </GridHead>
      <GridBody>
        <Rows>
          {STOCKS.map((s, i) => (
            <StockRow key={s[0]} s={s} i={i} />
          ))}
        </Rows>
        <VScroll>
          <Arrow $dir="up" $c="#989898" $s={7} $l={8} />
          <VThumb />
          <Arrow $dir="down" $c="#989898" $s={7} $l={8} />
        </VScroll>
      </GridBody>
      <Summary>
        <SummaryBox>19</SummaryBox>
      </Summary>

      <HSplit><Arrow $dir="down" $c="#200000" $s={6} $l={6} /></HSplit>
      <Panes>
        <LeftEdge />
        <Pane $w={774} $left={3}>
          <PaneBar>
            <PaneTabs active="走勢" first={69} />
            <StockSelect>
              <SelectText>1815 富喬</SelectText>
              <SelectButton><Arrow $dir="down" $c="#101010" $s={6} $l={7} /></SelectButton>
            </StockSelect>
            <Diagonal r={12} />
          </PaneBar>
          <QuoteBar>
            <QuoteName>富喬</QuoteName>
            <QuotePrice>35.3</QuotePrice>
            <Up>▲</Up>
            <QuoteChange>2.55</QuoteChange>
            <ChangeButton>變動</ChangeButton>
          </QuoteBar>
          <Intraday />
        </Pane>
        <VSplit><Arrow $dir="left" $c="#e87878" $s={5} $l={6} /></VSplit>
        <Pane $w={922} $left={4}>
          <PaneBar>
            <PaneTabs active="日" first={68} />
            <Averages />
            <Diagonal r={12} />
          </PaneBar>
          <CandleChart
            viewBox="793 878 915 579"
            x0={780}
            k={1.668}
            bodyWidth={17}
            frame={{ left: 819, right: 1609, top: 885.5, split: 1228, bottom: 1399.5 }}
            prices={[["42", 892.7, true], ["40", 924, false], ["38", 955.5, true], ["36", 986.5, false], ["34", 1018, true], ["32", 1049, false], ["30", 1080, true], ["28", 1110, false], ["26", 1141, true], ["24", 1171.5, false], ["22", 1203, true]]}
            volumes={[["250,000", 1250.7, true], ["200,000", 1280, false], ["150,000", 1310, true], ["100,000", 1339.5, false], ["50,000", 1370.5, true], ["0", 1398, false]]}
            dates={[["5/02", 1121, 1415], ["6/02", 1512, 1415]]}
            guides={[1121.7]}
            candles={DAILY}
            short={DAILY_SHORT}
            long={DAILY_LONG}
            bars={DAILY_VOL}
            note={[1545.5, 1400]}
            duller
            marker
          />
          <PaneScroll h={34} track={806} thumb={39} />
        </Pane>
        <VSplit $dots><Arrow $dir="right" $c="#200000" $s={5} $l={6} /></VSplit>
        <Pane $w={911} $left={4} $top={3}>
          <PaneBar>
            <PaneTabs active="周" first={68} />
            <Averages />
            <Diagonal r={12} />
          </PaneBar>
          <CandleChart
            viewBox="1725 881 904 573"
            x0={1700}
            k={1.682}
            bodyWidth={18}
            frame={{ left: 1750.5, right: 2530, top: 888, split: 1227.5, bottom: 1397 }}
            prices={[["42", 896, true], ["39", 931, false], ["36", 967, true], ["33", 1001, false], ["30", 1037.5, true], ["27", 1072, false], ["24", 1106.7, true], ["21", 1142.5, false], ["18", 1177, true], ["15", 1212.7, false]]}
            volumes={[["600,000", 1267, true], ["400,000", 1310, false], ["200,000", 1354, true], ["0", 1396, false]]}
            dates={[["10", 1837, 1411], ["1", 2087.5, 1411], ["4", 2318, 1411], ["2025", 2087, 1434]]}
            guides={[1837, 2318]}
            candles={WEEKLY}
            short={WEEKLY_SHORT}
            long={WEEKLY_LONG}
            bars={WEEKLY_VOL}
            note={[2466, 1397]}
          />
          <PaneScroll h={37} track={795} thumb={117} />
        </Pane>
      </Panes>
    </Window>
  );
}
